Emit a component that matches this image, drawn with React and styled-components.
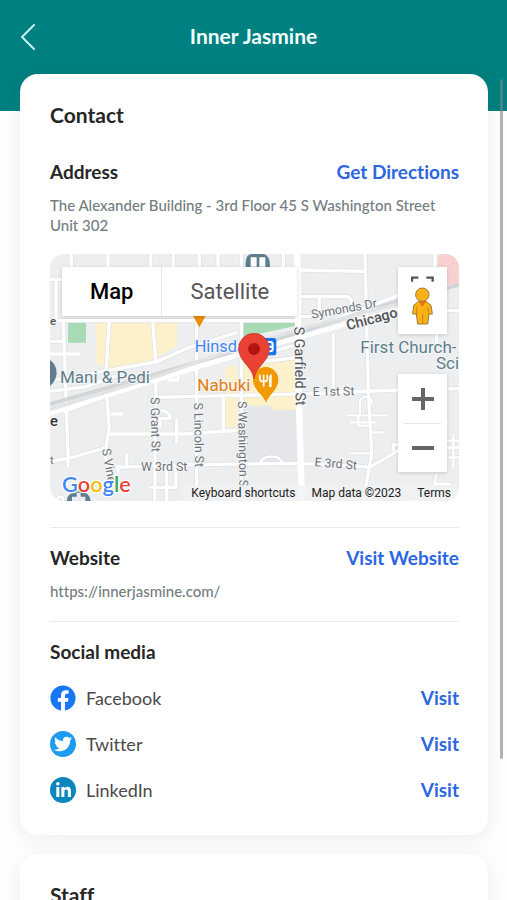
import React, { useState } from 'react';
import styled, { createGlobalStyle } from 'styled-components';
import { FaFacebook, FaTwitter, FaLinkedinIn } from 'react-icons/fa';

const socials = [
    { name: 'Facebook', color: '#1877f2', href: '#facebook', icon: <FaFacebook size={26} color="#1877f2" />, plain: true },
    { name: 'Twitter', color: '#1d9bf0', href: '#twitter', icon: <FaTwitter size={18} /> },
    { name: 'LinkedIn', color: '#0a85bd', href: '#linkedin', icon: <FaLinkedinIn size={17} /> },
];

const roads = [
    'M0 200H740',
    'M0 76H36 M18 76V200 M64 0V40 M174 0V40 M302 0V40 M370 0V40 M448 0V40 M504 0V40 M574 0V40 M700 0V40',
    'M0 262H40 M0 300H92 M40 200L54 600V640',
    'M178 200L168 355 M308 200L318 330 M440 200V700 M574 200V700',
    'M0 380L170 350L318 324L420 280L560 235',
    'M0 412L110 398L200 365',
    'M40 474L170 425L320 370L560 300L740 240L1042 125',
    'M170 425L178 520L165 600L182 690',
    'M182 480H220 M178 540H400L574 528',
    'M318 370L314 741 M314 430L748 420L1042 408L1227 404',
    'M520 430V528 M385 350V378H354',
    'M328 470Q360 470 360 494H330V520 M380 494V568',
    'M0 622L60 612L165 582',
    'M195 640L440 632L748 628L940 638',
    'M204 632V660 M230 600V640 M350 640V741 M378 640V700H300',
    'M740 48L945 52 M945 0L955 408L965 600L940 741',
    'M748 128H890Q905 130 905 150 M808 128V172 M748 188H790',
    'M850 240V408 M1155 0V40 M1150 170H1227 M1160 240V300',
    'M748 310L640 322 M640 300L748 270',
    'M940 638L960 640L1045 590L1227 580',
    'M1030 590V572H1050',
];

const lanes = [
    'M965 450A18 18 0 1 0 930 450V484 M890 484H1010 M925 484V515H960 M900 505H980 M965 535H1000 M900 598H965',
    'M630 628Q640 605 665 608Q690 605 698 628',
    'M1210 540V640 M1190 560H1227 M1190 610H1227 M1140 741L1160 660 M1150 690H1200V720H1140',
    'M22 741Q22 728 32 728Q40 728 40 741',
];

// x, y, rotation, text, size, colour, weight
const labels = [
    [0, 214, 0, 'e', 34, '#555', 500],
    [0, 516, 0, 'e', 44, '#333', 500],
    [0, 630, 0, 't', 34, '#777', 400],
    [30, 388, 0, 'Mani & Pedi', 51, '#5f7d8c', 400],
    [434, 293, 0, 'Hinsda', 49, '#4285f4', 400],
    [442, 410, 0, 'Nabuki', 51, '#e37f0e', 400],
    [931, 296, 0, 'First Church-', 51, '#5f7d8c', 400],
    [1158, 346, 0, 'Sci', 51, '#5f7d8c', 400],
    [786, 194, -10, 'Symonds Dr', 37, '#6f7478', 400],
    [893, 229, -15, 'Chicago', 43, '#4f5458', 500],
    [788, 426, -1, 'E 1st St', 37, '#6f7478', 400],
    [793, 636, 5, 'E 3rd St', 37, '#6f7478', 400],
    [273, 651, 0, 'W 3rd St', 37, '#6f7478', 400],
    [733, 218, 89, 'S Garfield St', 43, '#4f5458', 400],
    [302, 430, 89, 'S Grant St', 37, '#6f7478', 400],
    [432, 446, 89, 'S Lincoln St', 37, '#6f7478', 400],
    [564, 442, 89, 'S Washington S', 37, '#6f7478', 400],
    [156, 586, 80, 'S Vine', 37, '#6f7478', 400],
];

const googleLetters = [
    ['G', '#4285f4'],
    ['o', '#ea4335'],
    ['o', '#fbbc04'],
    ['g', '#4285f4'],
    ['l', '#34a853'],
    ['e', '#ea4335'],
];

const MapDrawing = () => (
    <MapSvg viewBox="0 0 1227 741" role="img" aria-label="Map of the area around 45 S Washington Street">
        <rect width="1227" height="741" fill="#eceef0" />
        <path d="M580 430H748V628H580Z" fill="#e5e6ea" />
        <path d="M54 206H108V266H54Z M576 200H736V216L576 250Z" fill="#a8dab5" />
        <path d="M136 206H382V276L310 316L200 344L140 330Z" fill="#fdf1cc" />
        <path d="M526 345L560 330V520H520L526 440Z M580 330L740 300V468H665V455H580Z" fill="#fdf1cc" />
        <circle cx="1210" cy="38" r="54" fill="#f8d0d0" />
        <g fill="none" stroke="#dde1e4" strokeWidth="14">
            {roads.map((d) => <path key={d} d={d} />)}
        </g>
        <g fill="none" stroke="#dde1e4" strokeWidth="11">
            {lanes.map((d) => <path key={d} d={d} />)}
        </g>
        <g fill="none" stroke="#fff" strokeWidth="7" strokeLinejoin="round">
            {lanes.map((d) => <path key={d} d={d} />)}
        </g>
        <g fill="none" stroke="#fff" strokeWidth="10" strokeLinejoin="round">
            {roads.map((d) => <path key={d} d={d} />)}
            <path d="M742 0L746 430L756 741" strokeWidth="19" />
            <path d="M0 478L170 425L320 378L560 304L748 250L1050 165" strokeWidth="13" />
        </g>
        <path d="M0 450L320 360L560 290L748 235L1042 142L1227 92" fill="none" stroke="#d3d6d8" strokeWidth="12" />
        <path d="M0 466L320 368L560 283L748 226L1042 150" fill="none" stroke="#e1e3e5" strokeWidth="10" />
        <g fontFamily="Roboto, sans-serif" stroke="#f4f5f6" strokeWidth="6" strokeLinejoin="round" paintOrder="stroke">
            {labels.map(([x, y, turn, text, size, color, weight]) => (
                <text key={`${text}${y}`} fontSize={size} fontWeight={weight} fill={color} transform={`translate(${x} ${y}) rotate(${turn})`}>
                    {text}
                </text>
            ))}
        </g>

        <path d="M0 318Q20 332 20 358Q18 382 0 396Z" fill="#5f7d8c" />
        <path d="M587 40Q584 0 606 0H642Q662 8 660 40Z" fill="#5f7d8c" />
        <path d="M602 38V10H620V38Z M628 38V10H646V38Z" fill="#fff" />
        <path d="M428 184H468L448 220Z" fill="#ee8d0b" />
        <path d="M50 741Q52 714 86 710Q120 714 122 741Z" fill="#5f7d8c" />
        <path d="M80 716H92V728H106V741H66V728H80Z" fill="#e8edf0" />

        {/* transit stop, half covered by the main pin */}
        <rect x="628" y="252" width="51" height="52" rx="8" fill="#1a73e8" />
        <path d="M650 264H662Q668 264 668 272V286Q668 292 660 292H644 M646 278H668" fill="none" stroke="#fff" strokeWidth="6" />

        <path d="M648 446C641 422 609 408 609 377A38 38 0 0 1 685 377C685 408 655 422 648 446Z" fill="#f29900" />
        <path d="M630 362V374Q630 382 636 382H646Q652 382 652 374V362M641 362V398" fill="none" stroke="#fff" strokeWidth="5" />
        <path d="M657 399V376Q657 361 665 361V399Z" fill="#fff" />
        <path d="M612 374C605 335 566 322 566 284A46 46 0 0 1 658 284C658 322 619 335 612 374Z" fill="#ea4335" stroke="#c5322a" strokeWidth="2" />
        <circle cx="612" cy="285" r="18" fill="#b31412" />

        <text x="36" y="713" fontFamily="Lato, sans-serif" fontSize="65" fontWeight="600" stroke="#fff" strokeWidth="8" paintOrder="stroke">
            {googleLetters.map(([letter, color], i) => <tspan key={i} fill={color}>{letter}</tspan>)}
        </text>
    </MapSvg>
);

const Pegman = () => (
    <svg width="24" height="50" viewBox="0 0 72 150" aria-hidden="true">
        <path d="M3 17V5H22 M46 5H65V17" fill="none" stroke="#555" strokeWidth="7" />
        <path d="M20 78Q34 68 48 78L60 88L64 114H54L50 144H20L16 114H5L8 88Z" fill="#fbb216" stroke="#9b7a3c" strokeWidth="3" strokeLinejoin="round" />
        <path d="M22 75H46L34 92Z" fill="#e8710a" />
        <path d="M35 114V144M18 94L17 114M51 94L52 114" stroke="#c98410" strokeWidth="3" />
        <circle cx="34" cy="56" r="20" fill="#fbb216" stroke="#9b7a3c" strokeWidth="3" />
    </svg>
);

const App = () => {
    const [mapType, setMapType] = useState('Map');

    return (
        <Screen>
            <GlobalStyle />
            <Scroller>
                <Header>
                    <BackButton aria-label="Back">
                        <svg width="16" height="28" viewBox="0 0 16 28" aria-hidden="true">
                            <path d="M14 3L2 15L14 27" fill="none" stroke="#c5f3f2" strokeWidth="2" strokeLinecap="round" strokeLinejoin="round" />
                        </svg>
                    </BackButton>
                    <Title>Inner Jasmine</Title>
                </Header>
                <Content>
                    <Card>
                        <CardTitle>Contact</CardTitle>
                        <Row>
                            <SectionTitle>Address</SectionTitle>
                            <ActionLink href="#directions">Get Directions</ActionLink>
                        </Row>
                        <Detail>The Alexander Building - 3rd Floor 45 S Washington Street Unit 302</Detail>
                        <MapFrame>
                            <MapDrawing />
                            <MapTypes>
                                {['Map', 'Satellite'].map((type) => (
                                    <MapType key={type} $active={type === mapType} onClick={() => setMapType(type)}>{type}</MapType>
                                ))}
                            </MapTypes>
                            <MapControls>
                                <PegmanButton aria-label="Street View"><Pegman /></PegmanButton>
                                <Zoom>
                                    <ZoomButton aria-label="Zoom in">
                                        <svg width="22" height="22" viewBox="0 0 22 22"><path d="M0 11H22M11 0V22" stroke="#666" strokeWidth="4" /></svg>
                                    </ZoomButton>
                                    <ZoomButton aria-label="Zoom out">
                                        <svg width="22" height="22" viewBox="0 0 22 22"><path d="M0 11H22" stroke="#666" strokeWidth="4" /></svg>
                                    </ZoomButton>
                                </Zoom>
                            </MapControls>
                            <Attribution>
                                <button>Keyboard shortcuts</button>
                                <span>Map data ©2023</span>
                                <a href="#terms">Terms</a>
                            </Attribution>
                        </MapFrame>
                        <Section>
                            <Row>
                                <SectionTitle>Website</SectionTitle>
                                <ActionLink href="#website">Visit Website</ActionLink>
                            </Row>
                            <Detail>https://innerjasmine.com/</Detail>
                        </Section>
                        <Section>
                            <SectionTitle>Social media</SectionTitle>
                            <SocialList>
                                {socials.map(({ name, color, href, icon, plain }) => (
                                    <SocialItem key={name}>
                                        <SocialIcon $color={plain ? '#fff' : color}>{icon}</SocialIcon>
                                        <SocialName>{name}</SocialName>
                                        <ActionLink href={href} aria-label={`Visit ${name}`}>Visit</ActionLink>
                                    </SocialItem>
                                ))}
                            </SocialList>
                        </Section>
                    </Card>
                    <Card>
                        <CardTitle>Staff</CardTitle>
                    </Card>
                </Content>
            </Scroller>
            <ScrollThumb />
        </Screen>
    );
};

const GlobalStyle = createGlobalStyle`
  * {
    box-sizing: border-box;
  }

  body {
    margin: 0;
    background: #fefefe;
    color: #262626;
    font-family: Lato, "Open Sans", sans-serif;
    font-variant-ligatures: none;
  }

  h1, h2, h3, p, ul {
    margin: 0;
    padding: 0;
  }

  button {
    padding: 0;
    border: 0;
    background: none;
    color: inherit;
    font: inherit;
    cursor: pointer;
  }
`;

const Screen = styled.div`
  position: relative;
  height: 100vh;
  overflow: hidden;
`;

const Scroller = styled.div`
  height: 100%;
  overflow-y: auto;
  scrollbar-width: none;
`;

const ScrollThumb = styled.div`
  position: absolute;
  top: 79px;
  right: 4px;
  bottom: 141px;
  width: 3px;
  border-radius: 2px;
  background: rgba(130, 130, 130, 0.6);
`;

const Header = styled.header`
  display: grid;
  grid-template-columns: 40px 1fr 40px;
  align-items: center;
  height: 111px;
  padding: 0 20px 39px;
  background: #008080;
`;

const BackButton = styled.button`
  display: flex;
  align-items: center;
  height: 40px;
`;

const Title = styled.h1`
  color: #f2ffff;
  font-size: 21px;
  font-weight: 700;
  line-height: 28px;
  text-align: center;
`;

const Content = styled.main`
  display: flex;
  flex-direction: column;
  gap: 19px;
  margin-top: -37px;
  padding: 0 19px 20px 20px;
`;

const Card = styled.section`
  padding: 27px 29px 22px 30px;
  border-radius: 18px;
  background: #fff;
  box-shadow: 0 4px 20px rgba(40, 40, 70, 0.08);
`;

const CardTitle = styled.h2`
  margin-bottom: 31px;
  font-size: 21px;
  font-weight: 700;
  line-height: 28px;
`;

const Row = styled.div`
  display: flex;
  align-items: center;
  justify-content: space-between;
`;

const SectionTitle = styled.h3`
  font-size: 19px;
  font-weight: 700;
  line-height: 24px;
`;

const ActionLink = styled.a`
  color: #2c67e2;
  font-size: 19px;
  font-weight: 700;
  line-height: 24px;
  text-decoration: none;
`;

const Detail = styled.p`
  margin-top: 11px;
  color: #737d82;
  font-size: 15px;
  font-weight: 500;
  line-height: 20px;
`;

const MapFrame = styled.div`
  position: relative;
  margin: 19px 0 26px;
  overflow: hidden;
  border-radius: 14px;
  font-family: Roboto, sans-serif;
`;

const MapSvg = styled.svg`
  display: block;
  width: 100%;
  height: auto;
`;

const MapTypes = styled.div`
  position: absolute;
  top: 13px;
  left: 12px;
  display: flex;
  background: #fff;
  box-shadow: 0 1px 4px rgba(0, 0, 0, 0.16);
`;

const MapType = styled.button`
  height: 49px;
  padding: 0 28px;
  color: ${({ $active }) => ($active ? '#000' : '#565656')};
  font-size: 22px;
  font-weight: ${({ $active }) => ($active ? 500 : 400)};

  & + & {
    border-left: 1px solid #e6e6e6;
  }
`;

const MapControls = styled.div`
  position: absolute;
  top: 13px;
  right: 12px;
  display: flex;
  flex-direction: column;
  gap: 40px;
  width: 49px;
`;

const PegmanButton = styled.button`
  display: flex;
  align-items: center;
  justify-content: center;
  height: 67px;
  background: #fff;
  box-shadow: 0 1px 4px rgba(0, 0, 0, 0.16);
`;

const Zoom = styled.div`
  padding: 0 6px;
  background: #fff;
  box-shadow: 0 1px 4px rgba(0, 0, 0, 0.16);
`;

const ZoomButton = styled.button`
  display: flex;
  align-items: center;
  justify-content: center;
  width: 100%;
  height: 49px;

  & + & {
    border-top: 1px solid #e6e6e6;
  }
`;

const Attribution = styled.div`
  position: absolute;
  right: 0;
  bottom: 0;
  display: flex;
  gap: 16px;
  padding: 0 8px;
  background: rgba(240, 241, 243, 0.8);
  color: #222;
  font-size: 12px;
  line-height: 16px;

  a {
    color: inherit;
    text-decoration: none;
  }
`;

const Section = styled.div`
  padding-top: 18px;
  border-top: 1px solid #e8e9ea;

  & + & {
    margin-top: 20px;
  }
`;

const SocialList = styled.ul`
  margin-top: 11px;
  list-style: none;
`;

const SocialItem = styled.li`
  display: flex;
  align-items: center;
  gap: 10px;
  height: 46px;
`;

const SocialIcon = styled.span`
  display: flex;
  align-items: center;
  justify-content: center;
  width: 26px;
  height: 26px;
  border-radius: 50%;
  background: ${({ $color }) => $color};
  color: #fff;
`;

const SocialName = styled.span`
  flex: 1;
  color: #4a4a4a;
  font-size: 18px;
  line-height: 24px;
`;

export default App;
